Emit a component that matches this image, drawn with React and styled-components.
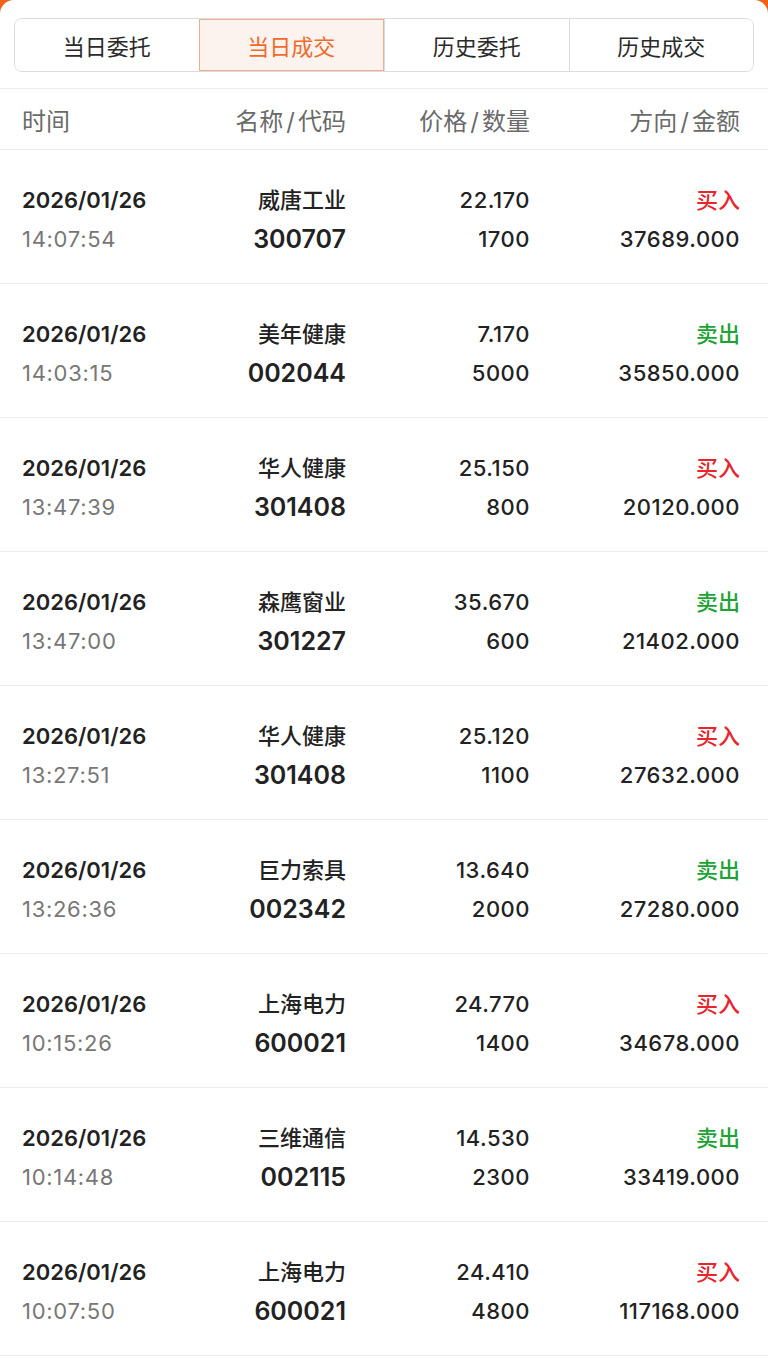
import React from 'react';
import styled, { createGlobalStyle } from 'styled-components';

const GlobalStyle = createGlobalStyle`
  html, body {
    margin: 0;
    padding: 0;
    background: #f2611a;
  }
  body {
    font-family: Inter, "Noto Sans CJK SC", sans-serif;
    -webkit-font-smoothing: antialiased;
  }
`;

const Page = styled.div`
  min-height: 1369px;
  background: #fff;
  border-radius: 14px 14px 0 0;
  overflow: hidden;
`;

const Tabs = styled.div`
  display: flex;
  margin: 18px 14px 0;
  height: 54px;
  box-sizing: border-box;
  border: 1px solid #dcdcdc;
  border-radius: 8px;
  overflow: hidden;
`;

const Tab = styled.div`
  flex: 1;
  display: flex;
  align-items: center;
  justify-content: center;
  font-size: 22px;
  color: ${p => (p.$active ? '#ee6a2c' : '#2a2a2a')};
  background: ${p => (p.$active ? '#fdf3ee' : '#fff')};
  border-left: 1px solid ${p => (p.$active ? '#eab092' : '#dcdcdc')};
  border-right: ${p => (p.$active ? '1px solid #eab092' : 'none')};
  box-shadow: ${p => (p.$active ? 'inset 0 1px 0 #eab092, inset 0 -1px 0 #eab092' : 'none')};
  &:first-child {
    border-left: none;
  }
`;

const Grid = styled.div`
  display: grid;
  grid-template-columns: 148px 176px 184px 210px;
  padding: 0 28px 0 22px;
  border-bottom: 1px solid #ececec;
`;

const HeadRow = styled(Grid)`
  margin-top: 16px;
  border-top: 1px solid #ececec;
  height: 60px;
  align-items: center;
`;

const HeadCell = styled.div`
  font-size: 24px;
  color: #6a6a6a;
  text-align: ${p => (p.$left ? 'left' : 'right')};
  & > i {
    font-style: normal;
    margin: 0 3px;
  }
`;

const Row = styled(Grid)`
  padding-top: 35px;
  padding-bottom: 29px;
`;

const Cell = styled.div`
  display: flex;
  flex-direction: column;
  gap: 9px;
  align-items: ${p => (p.$left ? 'flex-start' : 'flex-end')};
`;

const Line = styled.div`
  height: 30px;
  line-height: 30px;
  white-space: nowrap;
  font-size: ${p => p.$size || 22}px;
  font-weight: ${p => p.$weight || 500};
  letter-spacing: ${p => p.$track || 0}px;
  color: ${p => p.$color || '#222'};
`;

const tabs = ['当日委托', '当日成交', '历史委托', '历史成交'];

const RED = '#e8242c';
const GREEN = '#1ea336';

const trades = [
  { t: '14:07:54', name: '威唐工业', code: '300707', price: '22.170', qty: '1700', buy: true, amt: '37689.000' },
  { t: '14:03:15', name: '美年健康', code: '002044', price: '7.170', qty: '5000', buy: false, amt: '35850.000' },
  { t: '13:47:39', name: '华人健康', code: '301408', price: '25.150', qty: '800', buy: true, amt: '20120.000' },
  { t: '13:47:00', name: '森鹰窗业', code: '301227', price: '35.670', qty: '600', buy: false, amt: '21402.000' },
  { t: '13:27:51', name: '华人健康', code: '301408', price: '25.120', qty: '1100', buy: true, amt: '27632.000' },
  { t: '13:26:36', name: '巨力索具', code: '002342', price: '13.640', qty: '2000', buy: false, amt: '27280.000' },
  { t: '10:15:26', name: '上海电力', code: '600021', price: '24.770', qty: '1400', buy: true, amt: '34678.000' },
  { t: '10:14:48', name: '三维通信', code: '002115', price: '14.530', qty: '2300', buy: false, amt: '33419.000' },
  { t: '10:07:50', name: '上海电力', code: '600021', price: '24.410', qty: '4800', buy: true, amt: '117168.000' },
];

export default function App() {
  return (
    <Page>
      <GlobalStyle />
      <Tabs>
        {tabs.map((t, i) => (
          <Tab key={t} $active={i === 1}>{t}</Tab>
        ))}
      </Tabs>
      <HeadRow>
        <HeadCell $left>时间</HeadCell>
        <HeadCell>名称<i>/</i>代码</HeadCell>
        <HeadCell>价格<i>/</i>数量</HeadCell>
        <HeadCell>方向<i>/</i>金额</HeadCell>
      </HeadRow>
      {trades.map((r, i) => (
        <Row key={i}>
          <Cell $left>
            <Line $weight={600}>2026/01/26</Line>
            <Line $weight={400} $track={0.7} $color="#777">{r.t}</Line>
          </Cell>
          <Cell>
            <Line>{r.name}</Line>
            <Line $size={25} $weight={600}>{r.code}</Line>
          </Cell>
          <Cell>
            <Line $track={0.5}>{r.price}</Line>
            <Line $track={0.5}>{r.qty}</Line>
          </Cell>
          <Cell>
            <Line $color={r.buy ? RED : GREEN}>{r.buy ? '买入' : '卖出'}</Line>
            <Line $track={0.5}>{r.amt}</Line>
          </Cell>
        </Row>
      ))}
    </Page>
  );
}
